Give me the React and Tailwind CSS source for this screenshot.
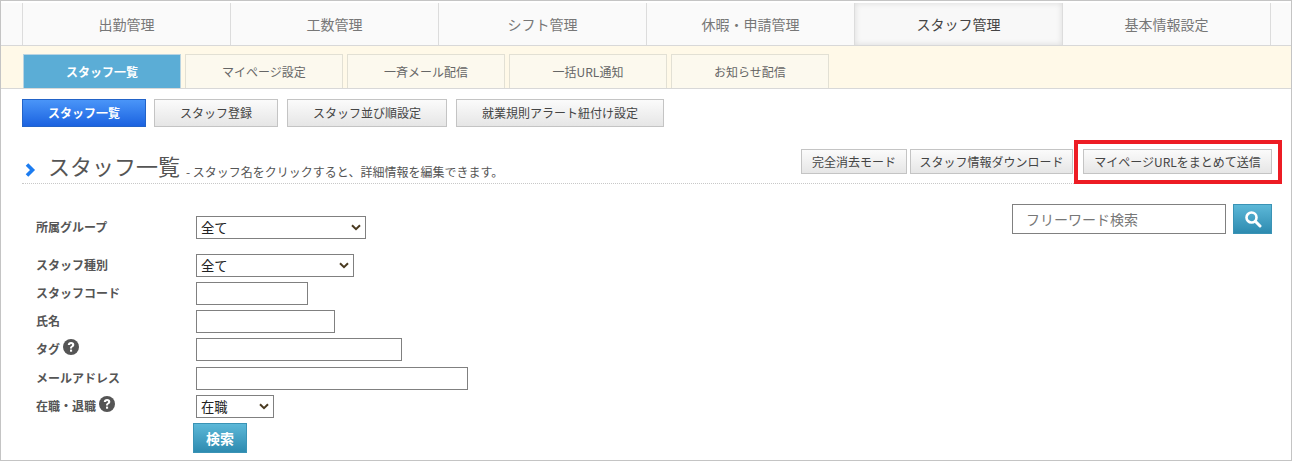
import React from "react";

const nav = ["出勤管理", "工数管理", "シフト管理", "休暇・申請管理", "スタッフ管理", "基本情報設定"];
const subs = ["スタッフ一覧", "マイページ設定", "一斉メール配信", "一括URL通知", "お知らせ配信"];

function Btn({ w, h = "h-[25px]", children }) {
  return (
    <div className={`${w} ${h} flex items-center justify-center border border-[#c4c4c4] bg-gradient-to-b from-[#fbfbfb] to-[#e6e6e6] text-[12px] text-[#444]`}>
      {children}
    </div>
  );
}

function Help() {
  return (
    <svg viewBox="0 0 16 16" className="w-[16px] h-[16px] ml-[3px] mb-[3px] shrink-0">
      <circle cx="8" cy="8" r="8" fill="#555" />
      <path d="M4.8 6.1c0-1.9 1.4-3 3.3-3s3.2 1.1 3.2 2.6c0 1.2-.7 1.8-1.5 2.4-.6.4-.8.7-.8 1.3H7c0-1.2.4-1.8 1.2-2.4.6-.4.9-.7.9-1.2s-.4-.8-1-.8-1 .4-1.1 1.1H4.8z" fill="#fff" />
      <rect x="7" y="10.6" width="2.1" height="2.1" fill="#fff" />
    </svg>
  );
}

function Row({ label, help, top, children }) {
  return (
    <div className={`flex items-center ${top} h-[23px]`}>
      <div className="w-[195px] pl-[35px] pb-[2px] flex items-center text-[12px] font-bold text-[#555] leading-none">
        {label}
        {help && <Help />}
      </div>
      {children}
    </div>
  );
}

function Sel({ w, children }) {
  return (
    <div className={`${w} h-[23px] border border-[#808080] bg-white flex items-center justify-between pl-[4px] pr-[4px] text-[13.33px] text-[#222]`}>
      <span>{children}</span>
      <svg viewBox="0 0 10 7" className="w-[10px] h-[7px]">
        <path d="M1 1.2 5 5.2 9 1.2" fill="none" stroke="#4a3a20" strokeWidth="2" />
      </svg>
    </div>
  );
}

function Inp({ w }) {
  return <div className={`${w} h-[23px] border border-[#808080] bg-white`} />;
}

export default function App() {
  return (
    <div className="w-[1292px] h-[461px] overflow-hidden bg-white border border-[#c4c4c4] font-['Noto_Sans_CJK_JP','Noto_Sans',sans-serif]">
      <div className="mt-[2px] h-[43px] bg-[#fafafa] border-b border-[#d8d8d8] flex pl-[21px]">
        {nav.map((n, i) => (
          <div
            key={n}
            className={`w-[208px] h-[42px] flex items-center justify-center text-[14px] border-l border-[#dcdcdc] ${
              i === 4 ? "bg-[#f8f8f8] text-[#444] shadow-[inset_0_0_6px_rgba(0,0,0,0.12)]" : "text-[#777]"
            }`}
          >
            {n}
          </div>
        ))}
        <div className="w-px h-[42px] bg-[#dcdcdc]" />
      </div>

      <div className="h-[43px] bg-[#fff9e8] border-b border-[#d8d8d8] flex items-end pl-[22px] gap-[4px]">
        {subs.map((s, i) => (
          <div
            key={s}
            className={`w-[158px] h-[34px] flex items-center justify-center text-[12px] border border-b-0 ${
              i === 0
                ? "bg-[#5badd6] border-[#b9d4e2] text-white font-bold"
                : "bg-[#fcf9ee] border-[#e2e0d4] text-[#666]"
            }`}
          >
            {s}
          </div>
        ))}
      </div>

      <div className="flex pl-[21px] mt-[10px]">
        <div className="w-[124px] h-[28px] flex items-center justify-center text-[12px] font-bold text-white bg-gradient-to-b from-[#4a95f8] to-[#1b62e0] border border-[#2263c8]">
          スタッフ一覧
        </div>
        <div className="ml-[8px]"><Btn w="w-[124px]" h="h-[28px]">スタッフ登録</Btn></div>
        <div className="ml-[9px]"><Btn w="w-[160px]" h="h-[28px]">スタッフ並び順設定</Btn></div>
        <div className="ml-[9px]"><Btn w="w-[208px]" h="h-[28px]">就業規則アラート紐付け設定</Btn></div>
      </div>

      <div className="relative mt-[13px] ml-[21px] w-[1250px] h-[44px] flex items-end justify-between border-b border-dotted border-[#c8c8c8]">
        <div className="flex items-end pl-[3px] h-[38px]">
          <svg viewBox="0 0 10 14" className="w-[11px] h-[14px] mb-[6px]">
            <path d="M1.5 1.5 7 7 1.5 12.5" fill="none" stroke="#1c7cf0" strokeWidth="3.6" />
          </svg>
          <span className="ml-[12px] text-[22px] leading-[30px] text-[#555] mb-[3px]">スタッフ一覧</span>
          <span className="ml-[6px] text-[12px] leading-[18px] text-[#555] mb-[2px]">- スタッフ名をクリックすると、詳細情報を編集できます。</span>
        </div>
        <div className="flex items-start h-[34px]">
          <Btn w="w-[106px]">完全消去モード</Btn>
          <div className="ml-[3px]"><Btn w="w-[163px]">スタッフ情報ダウンロード</Btn></div>
          <div className="ml-[10px]"><Btn w="w-[189px]">マイページURLをまとめて送信</Btn></div>
        </div>
        <div className="absolute left-[1052px] top-[0px] w-[208px] h-[44px] border-[4px] border-[#ed1c24]" />
      </div>

      <div className="relative pt-[32px]">
        <div className="absolute right-[19px] top-[20px] flex gap-[7px]">
          <div className="w-[214px] h-[30px] border border-[#808080] flex items-center pl-[13px] text-[14px] text-[#777]">
            フリーワード検索
          </div>
          <div className="w-[39px] h-[30px] flex items-center justify-center bg-gradient-to-b from-[#5cb8d8] to-[#2d8bb0] border border-[#3a93b5]">
            <svg viewBox="0 0 18 18" className="w-[18px] h-[18px]">
              <circle cx="7.5" cy="7.5" r="5" fill="none" stroke="#fff" strokeWidth="2.6" />
              <path d="M11.3 11.3 16 16" stroke="#fff" strokeWidth="3" strokeLinecap="round" />
            </svg>
          </div>
        </div>

        <Row label="所属グループ" top=""><Sel w="w-[170px]">全て</Sel></Row>
        <Row label="スタッフ種別" top="mt-[15px]"><Sel w="w-[158px]">全て</Sel></Row>
        <Row label="スタッフコード" top="mt-[5px]"><Inp w="w-[112px]" /></Row>
        <Row label="氏名" top="mt-[5px]"><Inp w="w-[139px]" /></Row>
        <Row label="タグ" help top="mt-[5px]"><Inp w="w-[206px]" /></Row>
        <Row label="メールアドレス" top="mt-[6px]"><Inp w="w-[272px]" /></Row>
        <Row label="在職・退職" help top="mt-[5px]"><Sel w="w-[78px]">在職</Sel></Row>
        <div className="ml-[192px] mt-[5px] w-[54px] h-[30px] flex items-center justify-center text-[14px] font-bold text-white bg-gradient-to-b from-[#5cb8d8] to-[#2d8bb0] border border-[#3a93b5]">
          検索
        </div>
      </div>
    </div>
  );
}
